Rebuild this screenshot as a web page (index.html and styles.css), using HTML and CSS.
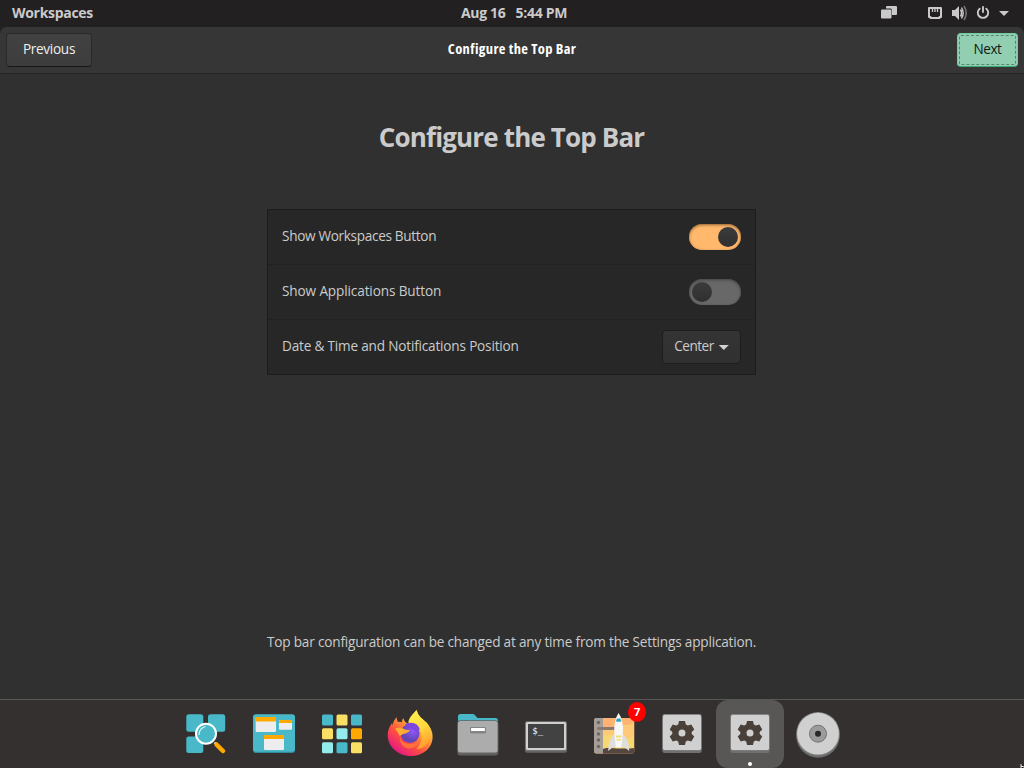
FILE: index.html
```html
<!DOCTYPE html>
<html lang="en">
<head>
<meta charset="utf-8">
<title>Configure the Top Bar</title>
<link rel="stylesheet" href="styles.css">
</head>
<body>
<div class="desktop">
  <header class="panel">
    <span class="panel-workspaces">Workspaces</span>
    <span class="panel-clock"><span>Aug 16</span><span>5:44 PM</span></span>
    <svg class="panel-tray" width="136" height="27" viewBox="880 0 136 27">
      <path fill="#cbcaca" d="M887 6h9q1 0 1 1v7q0 1-1 1h-9q-1 0-1-1V7q0-1 1-1z"/>
      <rect x="880.5" y="8.5" width="11.5" height="10.5" rx="1.5" fill="#232021"/>
      <rect x="881" y="9.5" width="10.500" height="9" rx="1" fill="#cbcaca"/>
      <path fill="none" stroke="#cbcaca" stroke-width="2" stroke-linejoin="round" d="M929 8h12v9h-1.500v1h-9v-1H929z"/>
      <path stroke="#cbcaca" stroke-width="1.300" d="M932.500 8v4M935 8v4M937.500 8v4"/>
      <path fill="#cbcaca" d="M952 10h3l4-4v14l-4-4h-3z"/>
      <path fill="none" stroke="#cbcaca" stroke-width="1.600" d="M960.500 9.500q2.200 3.500 0 7"/>
      <path fill="none" stroke="#777576" stroke-width="1.500" d="M964 6q4.500 7 0 14"/>
      <path fill="none" stroke="#cbcaca" stroke-width="1.400" d="M961.500 7.500q3.400 5.500 0 11"/>
      <path fill="none" stroke="#cbcaca" stroke-width="1.900" stroke-linecap="round" d="M983 7v5M979.700 8.700a5.200 5.200 0 1 0 6.600 0"/>
      <path fill="#cbcaca" d="M999 11h10l-5 5z"/>
    </svg>
  </header>
  <main class="window">
    <div class="titlebar">
      <button class="btn btn-previous"><span>Previous</span></button>
      <span class="title">Configure the Top Bar</span>
      <button class="btn btn-next"><span>Next</span></button>
    </div>
    <section class="content">
      <h1 class="heading">Configure the Top Bar</h1>
      <div class="list">
        <div class="row"><span class="label label-workspaces">Show Workspaces Button</span><span class="switch switch-on"><span class="knob"></span></span></div>
        <div class="row"><span class="label label-applications">Show Applications Button</span><span class="switch"><span class="knob"></span></span></div>
        <div class="row"><span class="label label-date">Date &amp; Time and Notifications Position</span><button class="btn dropdown"><span>Center</span><i class="caret"></i></button></div>
      </div>
      <p class="note">Top bar configuration can be changed at any time from the Settings application.</p>
    </section>
  </main>
  <nav class="dock">
    <svg class="tile" viewBox="0 0 68 68">
      <g fill="#49b9c9"><rect x="14.300" y="14.300" width="17" height="17.500" rx="2.500"/><rect x="36" y="14.300" width="17.200" height="17.500" rx="2.500"/><rect x="14.300" y="36.500" width="17" height="16.500" rx="2.500"/></g>
      <path d="M42.500 42.500L46 46" stroke="#fff" stroke-width="2"/>
      <path d="M44.500 44.500L51 51" stroke="#ffa900" stroke-width="4.500" stroke-linecap="round"/>
      <circle cx="34" cy="33.700" r="10" fill="#49b9c9" stroke="#fff" stroke-width="2"/>
      <path d="M27 35q0-6.500 6.500-8.500" fill="none" stroke="#d9f4f7" stroke-width="1.100"/>
    </svg>
    <svg class="tile" viewBox="0 0 68 68">
      <rect x="13" y="15" width="42" height="38" rx="3" fill="#308a97"/><rect x="13" y="14.300" width="42" height="37.400" rx="3" fill="#49b9c9"/>
      <g fill="#ededed"><rect x="15.700" y="17" width="20.300" height="15" rx="1"/><rect x="39" y="20" width="13" height="9.700" rx="1"/><rect x="24" y="35" width="20" height="15" rx="1"/></g>
      <path fill="#ffa900" d="M15.700 18q0-1 1-1H35q1 0 1 1v3.500H15.700zM39 21q0-1 1-1h11q1 0 1 1v2H39zM24 36q0-1 1-1h18q1 0 1 1v3H24z"/>
    </svg>
    <svg class="tile" viewBox="0 0 68 68">
      <g fill="#49b9c9"><rect x="14" y="14.500" width="11" height="11" rx="1.500"/><rect x="43" y="14.500" width="11" height="11" rx="1.500"/><rect x="28.500" y="42.300" width="11" height="11" rx="1.500"/></g>
      <g fill="#f9e064"><rect x="28.500" y="14.500" width="11" height="11" rx="1.500"/><rect x="14" y="28.300" width="11" height="11" rx="1.500"/><rect x="43" y="42.300" width="11" height="11" rx="1.500"/></g>
      <g fill="#94ebeb"><rect x="28.500" y="28.300" width="11" height="11" rx="1.500"/><rect x="14" y="42.300" width="11" height="11" rx="1.500"/></g>
      <rect x="43" y="28.300" width="11" height="11" rx="1.500" fill="#ffa900"/>
    </svg>
    <svg class="tile" viewBox="0 0 68 68">
      <defs>
        <linearGradient id="fox" x1=".85" y1=".1" x2=".2" y2=".95"><stop offset="0" stop-color="#fff44f"/><stop offset=".35" stop-color="#ffa436"/><stop offset=".65" stop-color="#ff5040"/><stop offset="1" stop-color="#e31587"/></linearGradient>
        <linearGradient id="tail" x1=".3" y1="0" x2=".6" y2="1"><stop offset="0" stop-color="#fff14f"/><stop offset=".5" stop-color="#ffd83d"/><stop offset="1" stop-color="#ff9a2d"/></linearGradient>
        <radialGradient id="globe" cx=".65" cy=".35"><stop offset="0" stop-color="#9059ff"/><stop offset="1" stop-color="#6546b8"/></radialGradient>
      </defs>
      <path fill="url(#fox)" d="M20.500 17q.200 3 1.500 5 2-.600 4 .200-.200-3 1.500-4 .500 4 5 5.500l3-6q3-5 5-7.700 1 4.500 4 7.200 4 3.500 5.500 7-.300-2-.400-3 6.800 7.500 7 15c.300 12-10 19.800-22 19.800S11.700 47 11.700 35c0-5 2.300-9.500 4.500-12-.200 1.500-.200 2-.100 2.500Q18 20 20.500 17z"/>
      <path fill="url(#tail)" d="M40.500 10q1 4.500 4 7.200c7 5 10.500 11 9.500 19-1 8-7 13-14 13 6-5 8-15 2-21-3-3-7-5-9.500-5-.500-4 3-8 8-13.200z"/>
      <circle cx="34" cy="33.500" r="9.500" fill="url(#globe)"/>
      <path fill="#7d47dd" d="M29 24q12-4 15 6l-4-1q3 4 3 6-3-5-10-7z"/>
      <path fill="#ffad32" d="M19 29q3-2 8-.500 2 1.500 7 1.800-1 2-4.500 3.200-5 1-5.500 3-2-5-5-7.500z"/>
      <path fill="#ff7139" d="M24 36q1 8 10 8 7 0 10-4.500-2 9-12 9-9-2-8-12.500z"/>
    </svg>
    <svg class="tile" viewBox="0 0 68 68">
      <path fill="#49b9c9" d="M14 22v-5.500q0-2.500 2.500-2.500h12.200q1.300 0 2.300 1.200l2.500 2.800h17.800q2.700 0 2.700 3v3H14z"/>
      <rect x="13.300" y="23" width="41" height="32.500" rx="3" fill="#616161"/>
      <rect x="13.300" y="20.300" width="41" height="32.700" rx="3" fill="#626262"/>
      <rect x="14" y="21" width="39.600" height="31.500" rx="2.500" fill="#acacac"/>
      <rect x="26" y="27" width="16" height="6.600" rx="1" fill="#858585"/><rect x="27" y="28" width="14" height="3" rx=".7" fill="#fff"/>
    </svg>
    <svg class="tile" viewBox="0 0 68 68">
      <rect x="13" y="23" width="42" height="29.700" rx="2" fill="#666"/>
      <rect x="13" y="21.300" width="42" height="29.400" rx="2" fill="#777"/>
      <rect x="14" y="22" width="40" height="28" rx="1.500" fill="#d0d0d0"/><rect x="16" y="24" width="36" height="24" fill="#424242"/>
      <text class="prompt" x="20.300" y="34">$_</text>
    </svg>
    <div class="app">
      <svg class="tile" viewBox="0 0 68 68">
        <defs><clipPath id="book"><rect x="14" y="18" width="40.300" height="35.500" rx="2.500"/></clipPath></defs>
        <g clip-path="url(#book)"><path fill="#ffb271" d="M14 18h41v36H14z"/><path fill="#ffca78" d="M23 30l31-7v16H23z"/><path fill="#f6d873" d="M23 36q8-3 15 1t16 0v14H23z"/><path fill="#544641" d="M23 49q5-2 8-1 12 1 24 0v6H23z"/><path fill="#a49d98" d="M14 18h9v36h-9z"/></g>
        <g fill="#706762"><circle cx="18.500" cy="22.500" r="1.700"/><circle cx="18.500" cy="34" r="1.700"/><circle cx="18.500" cy="40" r="1.700"/><circle cx="18.500" cy="46.500" r="1.700"/></g><path d="M18.500 28.500h18" stroke="#877872" stroke-width="3" stroke-linecap="round"/>
        <path fill="#dedede" d="M34 34q-6 7-5.800 17l5-4h11l5 4Q49.500 41 43 34z"/>
        <path fill="#f8f8f8" d="M38.600 13q-4.600 7-4.400 18l1.600 16.500h5.500L43 31q.400-11-4.400-18z"/>
        <path fill="#28a7bd" d="M37 18.500h3.300l1.200 2.700q-3 1.300-5.700 0z"/>
        <path fill="#f2dc77" d="M36 35.500h5.400v2H36zM36.500 39h4.500v1.500h-4.500z"/>
      </svg>
      <span class="badge">7</span>
    </div>
    <svg class="tile" viewBox="0 0 68 68">
      <g id="settings"><rect x="14.300" y="17" width="39.400" height="36" rx="2.500" fill="#707070"/><rect x="14.300" y="14" width="39.400" height="36.500" rx="2.500" fill="#858585"/><rect x="15" y="15" width="38" height="35" rx="1.700" fill="#d0d0d0"/>
      <path fill="#494039" fill-rule="evenodd" d="M31 21h6l.800 3.500 2 1.100 3.500-1.100 3 5-2.600 2.500v2l2.600 2.500-3 5-3.500-1.100-2 1.100L37 45h-6l-.800-3.500-2-1.100-3.500 1.100-3-5 2.600-2.500v-2l-2.600-2.500 3-5 3.500 1.100 2-1.100zM34 29.500a3.500 3.500 0 1 0 0 7 3.500 3.500 0 0 0 0-7z"/></g>
    </svg>
    <div class="app app-active">
      <svg class="tile" viewBox="0 0 68 68"><use href="#settings"/><circle cx="34" cy="64" r="2" fill="#fff"/></svg>
    </div>
    <svg class="tile" viewBox="0 0 68 68">
      <circle cx="34" cy="36" r="21.700" fill="#6d6d6d"/><circle cx="34" cy="33.700" r="21.700" fill="#858585"/><circle cx="34" cy="33.700" r="20.900" fill="#d0d0d0"/><circle cx="34" cy="33.700" r="8.500" fill="#9b9b9b" stroke="#737373"/><circle cx="34" cy="33.700" r="3" fill="#282828"/>
    </svg>
  </nav>
  <svg class="cursor" width="4" height="4" viewBox="0 0 4 4"><path d="M0 0h2l2 3v1H0z" fill="#111"/><path d="M1 0v4M1 2l3 1" stroke="#fff"/></svg>
</div>
</body>
</html>
```
FILE: styles.css
```css
* { box-sizing: border-box; }
body { margin: 0; background: #232021; color: #cbcbcb; font-family: "Open Sans", "Noto Sans", sans-serif; font-size: 13.6px; letter-spacing: -0.19px; }
button { font: inherit; color: inherit; letter-spacing: inherit; }
.desktop { position: relative; width: 1024px; height: 768px; display: flex; flex-direction: column; overflow: hidden; }
.panel { height: 27px; flex: none; display: grid; grid-template-columns: 1fr auto 1fr; align-items: center; padding: 0 8px 0 12px; font-size: 14px; font-weight: 700; letter-spacing: -0.3px; line-height: 24px; color: #cbcaca; }
.panel span { margin-bottom: 1px; }
.panel-clock { display: flex; gap: 10px; }
.panel-tray { justify-self: end; }
.window { height: 672px; flex: none; display: flex; flex-direction: column; background: #303030; border-radius: 7px 7px 0 0; }
.titlebar { height: 47px; flex: none; display: grid; grid-template-columns: 1fr auto 1fr; align-items: center; padding: 0 6px; background: #363636; border-bottom: 1px solid #232323; border-radius: 7px 7px 0 0; }
.title { font-size: 14.5px; font-weight: 700; color: #fff; line-height: 20px; margin-bottom: 2px; font-stretch: 75%; letter-spacing: 0.35px; }
.btn { height: 34px; padding: 0 0 2px; border: 1px solid #292929; border-bottom-color: #161616; border-radius: 4px; background: linear-gradient(#424242, #3d3d3d); white-space: nowrap; line-height: 20px; }
.btn-previous { width: 86px; color: #eee; letter-spacing: -0.3px; }
.btn-next { width: 61px; justify-self: end; letter-spacing: -0.5px; border-color: #73cba2; border-bottom-color: #36ab78; background: #92cfb2; color: #101a15; outline: 1px dashed #59866f; outline-offset: -3px; }
.content { flex: 1; display: flex; flex-direction: column; align-items: center; padding-right: 1px; }
.heading { margin: 43px 0 52px; height: 40px; line-height: 40px; font-size: 26px; font-weight: 700; white-space: nowrap; letter-spacing: -0.85px; }
.list { width: 489px; height: 166px; flex: none; border: 1px solid #1c1c1c; background: #272727; }
.row { height: 55px; display: flex; justify-content: space-between; align-items: center; padding: 0 14px; border-bottom: 1px solid #222; white-space: nowrap; }
.row:last-child { height: 54px; border-bottom: 0; }
.label { padding-bottom: 3px; }
.label-workspaces { letter-spacing: -0.32px; }
.label-applications { letter-spacing: -0.13px; }
.switch { width: 52px; height: 26px; padding: 3px; border-radius: 13px; background: #686868; box-shadow: inset 0 1px 3px #414141; display: flex; }
.switch-on { background: #ffb86c; box-shadow: inset 0 1px 3px #8b5d2f; justify-content: flex-end; }
.knob { width: 20px; height: 20px; border-radius: 50%; background: linear-gradient(#3b3b3b, #303030); }
.dropdown { width: 79px; display: flex; align-items: center; justify-content: center; gap: 5px; letter-spacing: -0.5px; background: linear-gradient(#343434, #303030); border-color: #1d1d1d; }
.caret { width: 10px; height: 5px; margin-top: 3px; background: #d0d0d0; clip-path: polygon(0 0, 100% 0, 50% 100%); }
.note { margin: 257px 0 0; line-height: 20px; white-space: nowrap; }
.dock { height: 69px; flex: none; display: flex; justify-content: center; background: #34302f; border-top: 1px solid #555857; }
.tile { display: block; width: 68px; height: 68px; flex: none; }
.app { position: relative; width: 68px; height: 68px; }
.app-active { border-radius: 12px; background: #595755; }
.badge { position: absolute; left: 48px; top: 2px; width: 18px; height: 20px; border-radius: 50%; background: #f00; color: #fff; font-size: 11px; font-weight: 700; line-height: 20px; text-align: center; }
.prompt { font: 9px "DejaVu Sans Mono", monospace; letter-spacing: 0; fill: #fff; }
.cursor { position: absolute; right: 0; bottom: 0; }
```
